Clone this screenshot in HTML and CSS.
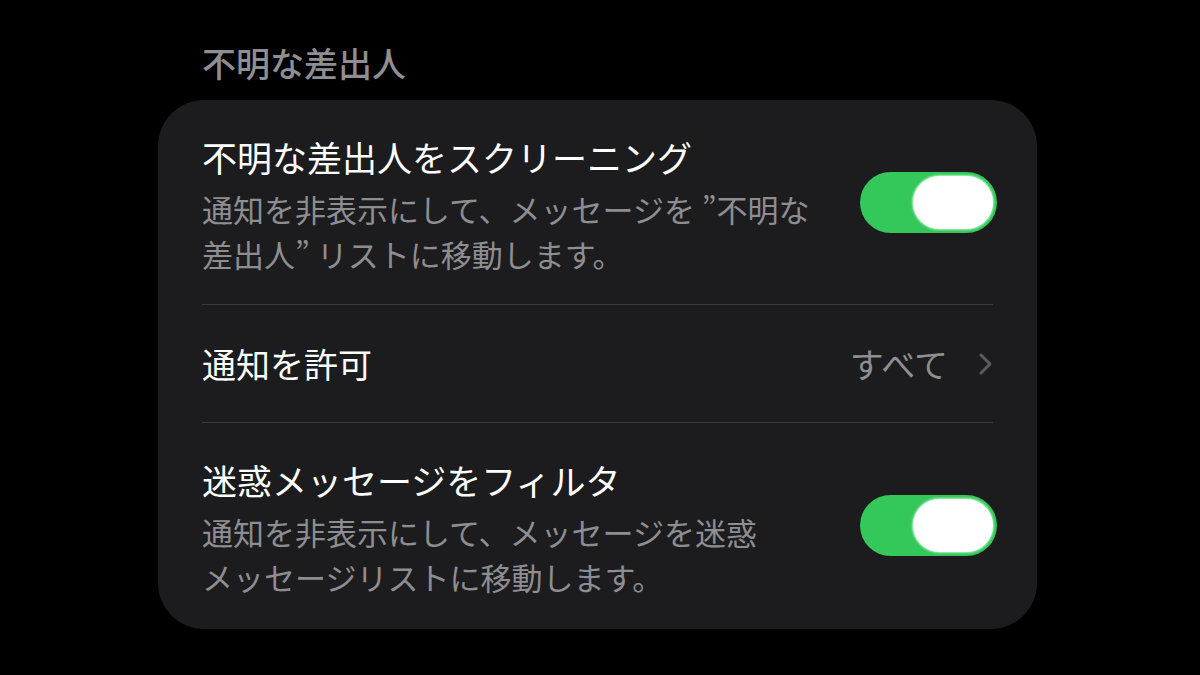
FILE: index.html
```html
<!DOCTYPE html>
<html lang="ja">
<head>
<meta charset="utf-8">
<link rel="stylesheet" href="styles.css">
</head>
<body>
<div class="page">
  <div class="section-header">不明な差出人</div>
  <div class="card">
    <div class="row row-first">
      <div class="text">
        <div class="title">不明な差出人をスクリーニング</div>
        <div class="sub">通知を非表示にして、メッセージを ”不明な<br>差出人” リストに移動します。</div>
      </div>
      <div class="toggle"><div class="knob"></div></div>
    </div>
    <div class="divider"></div>
    <div class="row row-link">
      <div class="title">通知を許可</div>
      <div class="value">
        <span>すべて</span>
        <svg class="chev" width="15" height="24" viewBox="0 0 15 24"><path d="M3 3 L12 12 L3 21" fill="none" stroke="#5b5b60" stroke-width="3" stroke-linecap="round" stroke-linejoin="round"/></svg>
      </div>
    </div>
    <div class="divider"></div>
    <div class="row row-last">
      <div class="text">
        <div class="title">迷惑メッセージをフィルタ</div>
        <div class="sub">通知を非表示にして、メッセージを迷惑<br>メッセージリストに移動します。</div>
      </div>
      <div class="toggle"><div class="knob"></div></div>
    </div>
  </div>
</div>
</body>
</html>
```

FILE: styles.css
```css
html, body {
  margin: 0;
  padding: 0;
  background: #000;
}
body {
  width: 1200px;
  height: 675px;
  overflow: hidden;
  font-family: "Noto Sans CJK JP", "Noto Sans", sans-serif;
  color: #fff;
}
.page {
  padding: 38px 0 0 158px;
}
.section-header {
  padding-left: 44px;
  font-size: 34px;
  font-weight: 500;
  line-height: 50px;
  color: #8e8e93;
  height: 62px;
}
.card {
  width: 879px;
  box-sizing: border-box;
  background: #1c1c1e;
  border-radius: 46px;
  padding: 0 40px 0 44px;
}
.row {
  display: flex;
  align-items: center;
  justify-content: space-between;
}
.row-first {
  padding: 35px 0 28px 0;
}
.row-last {
  padding: 35px 0 30px 0;
}
.row-link {
  height: 117px;
}
.title {
  font-size: 35px;
  line-height: 44px;
  color: #fff;
}
.row-link .title {
  font-size: 34px;
}
.sub {
  margin-top: 7px;
  font-size: 31px;
  line-height: 45px;
  color: #8d8d92;
}
.divider {
  height: 1px;
  background: #3a3a3d;
  margin-right: 4px;
}
.toggle {
  width: 137px;
  height: 61px;
  box-sizing: border-box;
  border-radius: 31px;
  background: #34c759;
  padding: 4px;
  display: flex;
  justify-content: flex-end;
  margin-top: -6px;
}
.knob {
  width: 80px;
  height: 53px;
  border-radius: 27px;
  background: #fff;
  box-shadow: 0 0 2px 1px rgba(200, 255, 210, 0.8);
}
.value {
  display: flex;
  align-items: center;
  gap: 30px;
  font-size: 34px;
  color: #8e8e93;
  margin-right: 4px;
}
.chev {
  display: block;
}
```
